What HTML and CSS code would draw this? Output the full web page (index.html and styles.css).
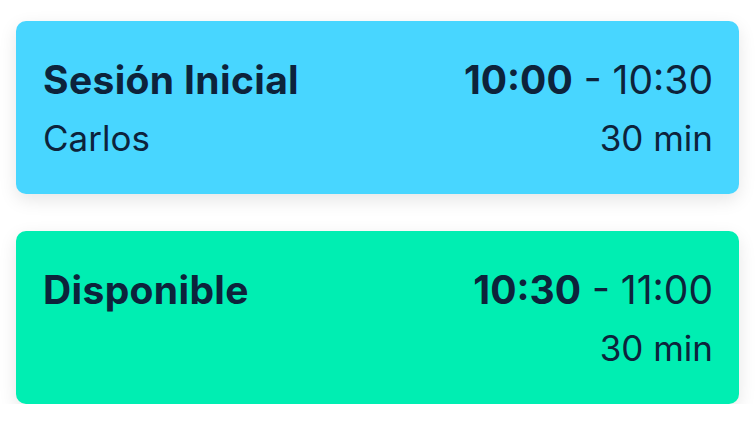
FILE: index.html
```html
<!DOCTYPE html>
<html lang="es">
<head>
<meta charset="utf-8">
<link rel="stylesheet" href="styles.css">
</head>
<body>
<div class="list">
  <div class="card card-blue">
    <div class="row">
      <span class="title">Sesión Inicial</span>
      <span class="time"><b>10:00</b> - 10:30</span>
    </div>
    <div class="row">
      <span class="sub">Carlos</span>
      <span class="sub">30 min</span>
    </div>
  </div>
  <div class="card card-green">
    <div class="row">
      <span class="title">Disponible</span>
      <span class="time"><b>10:30</b> - 11:00</span>
    </div>
    <div class="row">
      <span class="sub"></span>
      <span class="sub">30 min</span>
    </div>
  </div>
</div>
</body>
</html>
```
FILE: styles.css
```css
html, body {
  margin: 0;
  padding: 0;
  background: #ffffff;
}
body {
  font-family: Inter, "Noto Sans", sans-serif;
  color: #0d233b;
}
.list {
  display: flex;
  flex-direction: column;
  gap: 37px;
  padding: 21px 17px 0 16px;
}
.card {
  height: 173px;
  box-sizing: border-box;
  border-radius: 10px;
  padding: 35px 26px 0 27px;
  box-shadow: 0 6px 18px rgba(0, 0, 0, 0.10);
  display: flex;
  flex-direction: column;
  gap: 10px;
}
.card-blue { background: #48d6ff; }
.card-green { background: #00eeb2; }
.row {
  display: flex;
  justify-content: space-between;
  align-items: baseline;
  line-height: 48px;
}
.title {
  font-weight: 700;
  font-size: 39px;
  letter-spacing: 0.35px;
}
.time {
  font-size: 39px;
  font-weight: 400;
}
.time b { font-weight: 700; }
.sub {
  font-size: 35px;
}
```
